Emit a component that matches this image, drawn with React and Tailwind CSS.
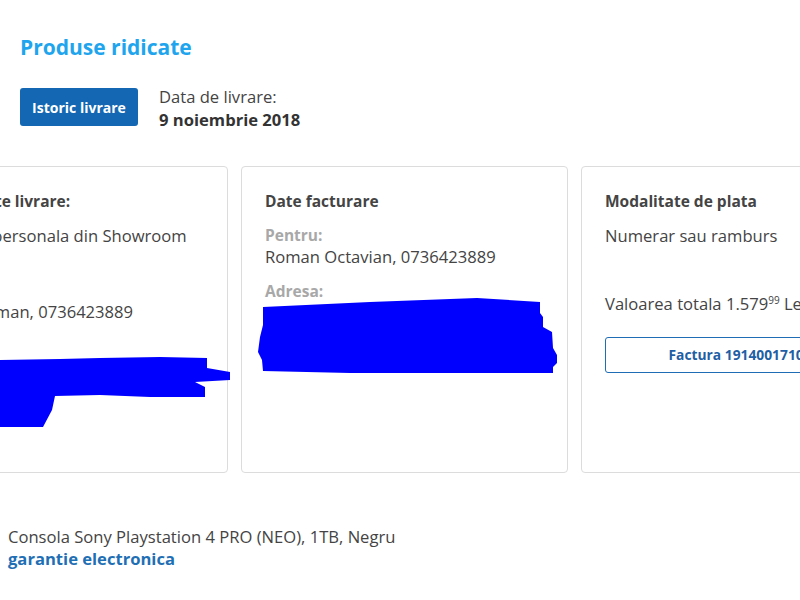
import React from "react";

export default function App() {
  return (
    <div
      className="w-[800px] h-[600px] overflow-hidden bg-white text-[#333]"
      style={{ fontFamily: '"Open Sans", "Noto Sans", sans-serif' }}
    >
      <div className="px-5 pt-[33px]">
        <h1 className="text-[21px] font-bold text-[#1ea5ee] leading-[28px]">Produse ridicate</h1>
        <div className="flex items-start gap-[21px] mt-[26px]">
          <button className="w-[118px] h-[38px] mt-[1px] rounded-[3px] bg-[#1467b3] text-white text-[14px] font-bold">
            Istoric livrare
          </button>
          <div className="text-[16.6px] leading-[23px] -mt-[2px]">
            <div className="text-[#444]">Data de livrare:</div>
            <div className="font-bold text-[#333]">9 noiembrie 2018</div>
          </div>
        </div>
      </div>

      <div className="flex gap-[13px] mt-[35px] ml-[-99px]">
        {/* Left card */}
        <div className="w-[327px] shrink-0 h-[307px] border border-[#dcdcdc] rounded-[4px] px-6 pt-[23px] relative">
          <div className="text-[15.5px] font-bold text-[#444] leading-[22px] text-right pr-[135px] whitespace-nowrap">Modalitate livrare:</div>
          <div className="text-[16.6px] leading-[23px] mt-[12px] whitespace-nowrap text-[#444]">Ridicare personala din Showroom</div>
          <div className="text-[15.5px] font-bold text-[#a8a8a8] leading-[20px] mt-[33px]">Pentru:</div>
          <div className="text-[16.6px] leading-[23px] whitespace-nowrap text-[#444]">Octav Roman, 0736423889</div>
          <svg className="absolute left-[98px] top-[183px]" width="240" height="85" viewBox="0 0 240 85">
            <polygon
              fill="#0000ff"
              points="0,10 60,9 100,8 160,7 207,8 207,18 230,22 230,30 195,32 205,37 205,47 150,47 100,45 55,46 52,60 43,77 0,77"
            />
          </svg>
        </div>

        {/* Middle card */}
        <div className="w-[327px] shrink-0 h-[307px] border border-[#dcdcdc] rounded-[4px] pl-[23px] pr-6 pt-[23px] relative">
          <div className="text-[15.5px] font-bold text-[#444] leading-[22px]">Date facturare</div>
          <div className="text-[15.5px] font-bold text-[#a8a8a8] leading-[20px] mt-[13px]">Pentru:</div>
          <div className="text-[16.6px] leading-[23px] text-[#444]">Roman Octavian, 0736423889</div>
          <div className="text-[15.5px] font-bold text-[#a8a8a8] leading-[20px] mt-[13px]">Adresa:</div>
          <svg className="absolute left-[8px] top-[123px]" width="310" height="90" viewBox="0 0 310 90">
            <polygon
              fill="#0000ff"
              points="13,17 120,12 227,8 290,12 290,23 293,27 293,37 302,42 303,58 307,65 307,73 303,77 303,83 180,83 100,83 13,81 12,70 8,62 10,47 13,35"
            />
          </svg>
        </div>

        {/* Right card */}
        <div className="w-[327px] shrink-0 h-[307px] border border-[#dcdcdc] rounded-[4px] pl-[23px] pr-6 pt-[23px]">
          <div className="text-[15.5px] font-bold text-[#444] leading-[22px]">Modalitate de plata</div>
          <div className="text-[16.6px] leading-[23px] mt-[12px] text-[#444]">Numerar sau ramburs</div>
          <div className="text-[16.6px] leading-[23px] mt-[45px] text-[#444] whitespace-nowrap">
            Valoarea totala 1.579<span className="text-[10px] relative -top-[6px]">99</span> Lei
          </div>
          <button className="w-full h-[36px] mt-[19px] border border-[#1f6db5] rounded-[3px] text-[#1f5fa5] text-[13.8px] font-bold whitespace-nowrap">
            Factura 191400171023
          </button>
        </div>
      </div>

      <div className="px-2 mt-[53px]">
        <div className="text-[16.6px] leading-[22px] text-[#444]">Consola Sony Playstation 4 PRO (NEO), 1TB, Negru</div>
        <div className="text-[16.6px] leading-[22px] font-bold text-[#1f6fb5]">garantie electronica</div>
      </div>
    </div>
  );
}
